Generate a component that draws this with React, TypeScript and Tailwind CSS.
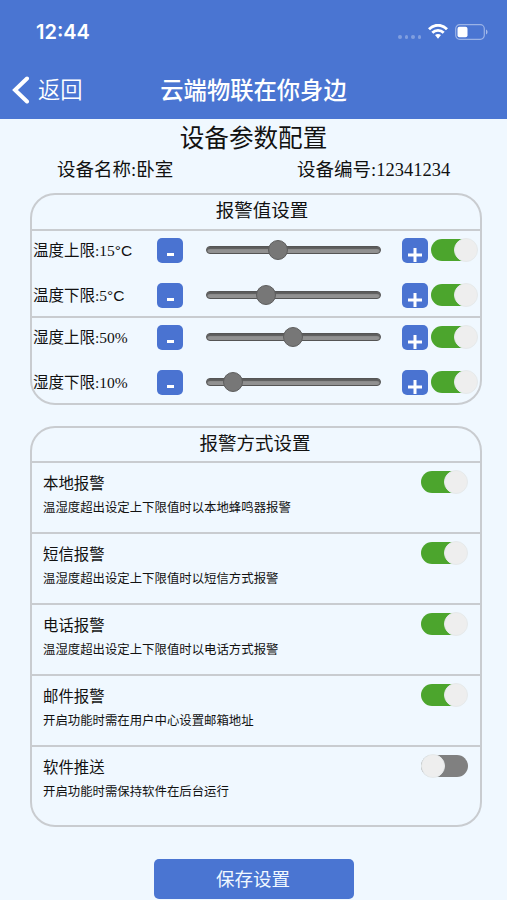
import { useState } from "react";

const limits = [
  [
    { label: "温度上限:15", unit: "°C", value: 40.2 },
    { label: "温度下限:5", unit: "°C", value: 33.6 },
  ],
  [
    { label: "湿度上限:50%", unit: "", value: 49.3 },
    { label: "湿度下限:10%", unit: "", value: 14.5 },
  ],
];

const methods = [
  { title: "本地报警", desc: "温湿度超出设定上下限值时以本地蜂鸣器报警", on: true },
  { title: "短信报警", desc: "温湿度超出设定上下限值时以短信方式报警", on: true },
  { title: "电话报警", desc: "温湿度超出设定上下限值时以电话方式报警", on: true },
  { title: "邮件报警", desc: "开启功能时需在用户中心设置邮箱地址", on: true },
  { title: "软件推送", desc: "开启功能时需保持软件在后台运行", on: false },
];

function Toggle({ defaultOn }: { defaultOn: boolean }) {
  const [on, setOn] = useState(defaultOn);

  return (
    <button
      onClick={() => setOn(!on)}
      className={
        on
          ? "flex h-[22px] w-[47px] shrink-0 items-center justify-end rounded-full bg-linear-to-r from-[#4ca52d] from-75% to-transparent to-75%"
          : "flex h-[22px] w-[47px] shrink-0 items-center justify-start rounded-full bg-[#808080]"
      }
    >
      <span className="h-6 w-6 shrink-0 rounded-full border border-[#e6eaeb] bg-[#eeeeee]"></span>
    </button>
  );
}

function Slider({ value }: { value: number }) {
  return (
    <div className="relative ml-[23px] h-2 w-[175px] shrink-0 rounded-full border border-[#555] bg-[#919191] shadow-[inset_0_2px_1px_#5c5c5c]">
      <span
        className="absolute -top-[7px] h-5 w-5 rounded-full border border-[#5e5e5e] bg-[#777777]"
        style={{ left: `calc(${value}% - 10px + 1px)` }}
      ></span>
    </div>
  );
}

function LimitRow({ label, unit, value }: { label: string; unit: string; value: number }) {
  return (
    <div className="flex h-[38px] items-center pl-px">
      <span className="w-[124px] shrink-0 pt-[2px] text-[15.5px] leading-none whitespace-nowrap">
        {label}
        <span className="font-['Liberation_Sans',sans-serif]">{unit}</span>
      </span>
      <button className="flex h-[25px] w-[26px] shrink-0 items-center justify-center rounded-[5px] bg-[#4a73d1]">
        <span className="mt-[9px] h-[3px] w-[7px] bg-white"></span>
      </button>
      <Slider value={value} />
      <button className="ml-[21px] flex h-[25px] w-[26px] shrink-0 items-center justify-center rounded-[5px] bg-[#4a73d1]">
        <svg className="mt-[9px] h-[14px] w-[14px]" viewBox="0 0 14 14" stroke="white" strokeWidth="3">
          <path d="M0 7h14M7 0v14" />
        </svg>
      </button>
      <div className="ml-[3px] flex">
        <Toggle defaultOn={true} />
      </div>
    </div>
  );
}

export default function App() {
  return (
    <div className="h-[900px] w-[507px] overflow-hidden bg-[#f0f8ff] font-['Liberation_Serif','Noto_Sans_CJK_SC',serif] text-[#111]">
      {/* header */}
      <div className="h-[119px] bg-[#4a75d2] font-['Inter','Noto_Sans_CJK_SC',sans-serif] text-white">
        <div className="flex h-[63px] items-center justify-between pr-[19px] pl-[36px]">
          <span className="text-[20px] font-semibold leading-none">12:44</span>
          <div className="flex items-center">
            <div className="mt-[11px] mr-[7px] flex gap-[3px]">
              <span className="h-[3.5px] w-[3.5px] rounded-full bg-white/30"></span>
              <span className="h-[3.5px] w-[3.5px] rounded-full bg-white/30"></span>
              <span className="h-[3.5px] w-[3.5px] rounded-full bg-white/30"></span>
              <span className="h-[3.5px] w-[3.5px] rounded-full bg-white/30"></span>
            </div>
            <svg className="h-[15px] w-5" viewBox="0 0 20 15" fill="none" stroke="white" strokeWidth="2.8">
              <path d="M1 5.2C6-.1 14-.1 19 5.2" />
              <path d="M4.3 8.8c3.2-3.2 8.2-3.2 11.4 0" />
              <path d="M7 11.1c1.7-1.5 4.3-1.5 6 0L10 14.8z" fill="white" stroke="none" />
            </svg>
            <svg className="ml-[7px] h-4 w-[33px]" viewBox="0 0 33 16" fill="none">
              <rect x=".7" y=".7" width="28.6" height="14.6" rx="4" stroke="white" strokeOpacity=".45" strokeWidth="1.2" />
              <rect x="2.5" y="2.8" width="10" height="10.4" rx="2" fill="white" />
              <path d="M31 5.5c2 .8 2 4.2 0 5z" fill="white" fillOpacity=".5" />
            </svg>
          </div>
        </div>
        <div className="grid h-[54px] grid-cols-[1fr_auto_1fr] items-center">
          <button className="flex items-center pl-3">
            <svg className="h-[28px] w-[18px]" viewBox="0 0 18 28" fill="none" stroke="white" strokeWidth="4">
              <path d="M15 2.5L3 14l12 11.5" strokeLinecap="round" />
            </svg>
            <span className="ml-2 text-[22.3px] leading-none font-[350]">返回</span>
          </button>
          <h1 className="pt-px text-[23.3px] font-medium leading-none">云端物联在你身边</h1>
        </div>
      </div>

      {/* device info */}
      <h2 className="flex h-[37px] items-center justify-center pt-[3px] text-[24.6px] leading-none">设备参数配置</h2>
      <div className="flex h-[26px] items-center pt-[2px] text-[18.5px] leading-none">
        <span className="ml-[57px] w-[240px]">设备名称:卧室</span>
        <span>设备编号:12341234</span>
      </div>

      {/* alarm values */}
      <div className="mt-[11px] ml-[30px] h-[212px] w-[452px] rounded-[25px] border-2 border-[#c9ccd0]">
        <h3 className="flex h-[34px] items-center justify-center pb-[2px] pl-[12px] text-[18.5px] leading-none">报警值设置</h3>
        {limits.map((group, i) => (
          <div key={i} className="flex h-[87px] flex-col gap-[7px] border-t-2 border-[#c9ccd0]">
            {group.map((row) => (
              <LimitRow key={row.label} label={row.label} unit={row.unit} value={row.value} />
            ))}
          </div>
        ))}
      </div>

      {/* alarm methods */}
      <div className="mt-[21px] ml-[30px] h-[401px] w-[452px] rounded-[25px] border-2 border-[#c9ccd0]">
        <h3 className="flex h-[33px] items-center justify-center pr-[2px] pb-px text-[18.5px] leading-none">报警方式设置</h3>
        {methods.map((item) => (
          <div key={item.title} className="flex h-[71px] justify-between border-t-2 border-[#c9ccd0] pr-[12px] pl-[11px]">
            <div className="pt-[12px]">
              <p className="text-[15.4px] leading-[18px]">{item.title}</p>
              <p className="mt-[8px] text-[12.4px] leading-[15px]">{item.desc}</p>
            </div>
            <div className="mt-2">
              <Toggle defaultOn={item.on} />
            </div>
          </div>
        ))}
      </div>

      <button className="mt-8 ml-[154px] flex h-10 w-[200px] items-center justify-center rounded-[5px] bg-[#4a75d2] pt-[2px] pr-[2px] text-[18.5px] leading-none text-[#f0f8ff]">
        保存设置
      </button>
    </div>
  );
}
